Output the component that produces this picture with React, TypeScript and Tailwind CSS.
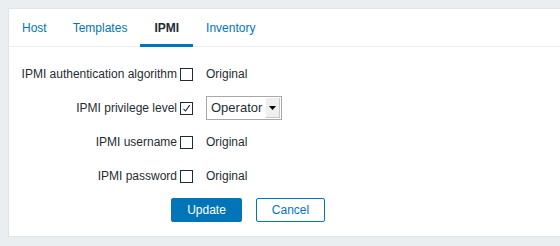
const tabs = ["Host", "Templates", "IPMI", "Inventory"];

function Check({ checked }: { checked?: boolean }) {
  return (
    <span className="ml-[3px] flex h-[13px] w-[13px] shrink-0 items-center justify-center border border-[#1f2c33] bg-white">
      {checked && (
        <svg width="9" height="9" viewBox="0 0 9 9">
          <path d="M1.5 4.8 L3.5 7 L7.8 1.2" fill="none" stroke="#1f2c33" strokeWidth="1.1" />
        </svg>
      )}
    </span>
  );
}

function Row({ label, checked, children }: { label: string; checked?: boolean; children: React.ReactNode }) {
  return (
    <div className="flex h-[24px] items-center">
      <div className="flex w-[184px] items-center justify-end">
        <span>{label}</span>
        <Check checked={checked} />
      </div>
      <div className="ml-[13px] flex items-center">{children}</div>
    </div>
  );
}

export default function App() {
  return (
    <div
      className="h-[246px] w-[560px] overflow-hidden bg-[#ebeef0] pt-[8px] text-[12px] text-[#1f2c33]"
      style={{ fontFamily: '"Liberation Sans", Arial, sans-serif' }}
    >
      <div className="ml-[8px] h-[229px] w-[560px] border border-[#dfe4e7] bg-white">
        <ul className="flex h-[38px] border-b border-[#ebeef0]">
          {tabs.map((t) => (
            <li
              key={t}
              className={`relative flex items-center ${
                t === "IPMI" ? "px-[14px] font-bold text-[#1f2c33]" : "px-[13px] text-[#0275b8]"
              }`}
            >
              {t}
              {t === "IPMI" && (
                <span className="absolute right-0 -bottom-px left-0 h-[3px] bg-[#0275b8]" />
              )}
            </li>
          ))}
        </ul>
        <div className="flex flex-col gap-[10px] pt-[15px]">
          <Row label="IPMI authentication algorithm">Original</Row>
          <Row label="IPMI privilege level" checked>
            <div className="flex h-[24px] w-[76px] items-stretch border border-[#a9a9a9] bg-white">
              <span className="flex flex-1 items-center pl-[4px] text-[13px]">Operator</span>
              <span className="m-[1px] flex w-[14px] items-center justify-center border-r border-b border-[#c8c8c8] bg-[#efefef]">
                <svg width="7" height="4" viewBox="0 0 7 4">
                  <path d="M0 0 H7 L3.5 4 Z" fill="#000" />
                </svg>
              </span>
            </div>
          </Row>
          <Row label="IPMI username">Original</Row>
          <Row label="IPMI password">Original</Row>
        </div>
        <div className="mt-[10px] flex gap-[14px] pl-[162px]">
          <button className="h-[24px] w-[71px] rounded-[2px] border border-[#0275b8] bg-[#0275b8] text-[12px] text-white">
            Update
          </button>
          <button className="h-[24px] w-[69px] rounded-[2px] border border-[#0275b8] bg-white text-[12px] text-[#0275b8]">
            Cancel
          </button>
        </div>
      </div>
    </div>
  );
}
